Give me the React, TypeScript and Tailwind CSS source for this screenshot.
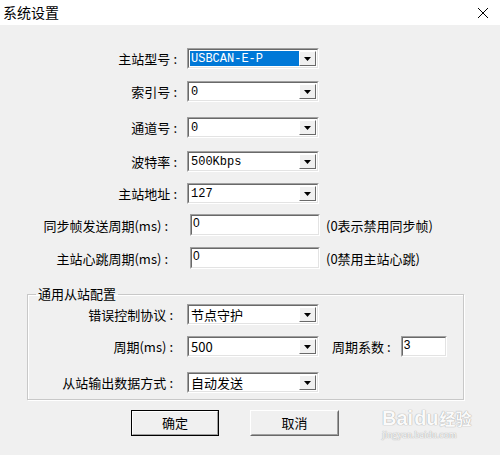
import React from "react";

const cjk = "font-['Microsoft_YaHei','Noto_Sans_CJK_SC',sans-serif]";

const Arrow = () => (
  <svg width="7" height="4" viewBox="0 0 7 4">
    <path d="M0 0h7L3.5 4z" fill="#000" />
  </svg>
);

const Combo = ({ value, selected = false, mono = true }: { value: string; selected?: boolean; mono?: boolean }) => (
  <div className="flex h-[21px] w-[132px] border border-t-[#a0a0a0] border-l-[#a0a0a0] border-b-white border-r-white">
    <div className="flex flex-1 border border-t-[#696969] border-l-[#696969] border-b-[#e3e3e3] border-r-[#e3e3e3] bg-white p-px">
      <div
        className={
          (selected ? "bg-[#0078d7] text-white " : "text-black ") +
          (mono ? "font-['Liberation_Mono',monospace] text-[12px] " : cjk + " text-[13px] ") +
          "flex flex-1 items-center pl-[1px] leading-none"
        }
      >
        {value}
      </div>
      <div className="flex w-[17px] items-center justify-center border border-t-white border-l-white border-b-[#696969] border-r-[#696969] bg-[#f0f0f0]">
        <Arrow />
      </div>
    </div>
  </div>
);

const Edit = ({ value, w = "w-[130px]", h = "h-[22px]" }: { value: string; w?: string; h?: string }) => (
  <div className={`${w} ${h} flex border border-t-[#a0a0a0] border-l-[#a0a0a0] border-b-white border-r-white`}>
    <div className="flex-1 border border-t-[#696969] border-l-[#696969] border-b-[#e3e3e3] border-r-[#e3e3e3] bg-white pl-[1px] font-['Liberation_Sans',sans-serif] text-[12px] leading-[14px] text-black">
      {value}
    </div>
  </div>
);

// label text with the spaced colon the dialog font gives
const Label = ({ text, w }: { text: string; w: string }) => (
  <div className={`${w} ${cjk} shrink-0 text-right text-[13px] leading-none text-black`}>
    {text}
    <span className="ml-[3px]">:</span>
  </div>
);

export default function App() {
  return (
    <div className="relative h-[455px] w-[500px] overflow-hidden bg-[#f0f0f0]">
      <div className="flex h-[25px] items-center justify-between bg-white pl-[3px] pr-[12px]">
        <span className={`${cjk} text-[14px] text-black`}>系统设置</span>
        <svg width="10" height="10" viewBox="0 0 10 10">
          <path d="M0 0L10 10M10 0L0 10" stroke="#000" strokeWidth="1" />
        </svg>
      </div>

      <div className="flex flex-col">
        <div className="mt-[23px] flex h-[21px] items-center">
          <Label text="主站型号" w="w-[177px]" />
          <div className="ml-[10px]"><Combo value="USBCAN-E-P" selected /></div>
        </div>
        <div className="mt-[12px] flex h-[21px] items-center">
          <Label text="索引号" w="w-[177px]" />
          <div className="ml-[10px]"><Combo value="0" /></div>
        </div>
        <div className="mt-[15px] flex h-[21px] items-center">
          <Label text="通道号" w="w-[177px]" />
          <div className="ml-[10px]"><Combo value="0" /></div>
        </div>
        <div className="mt-[13px] flex h-[21px] items-center">
          <Label text="波特率" w="w-[177px]" />
          <div className="ml-[10px]"><Combo value="500Kbps" /></div>
        </div>
        <div className="mt-[11px] flex h-[21px] items-center">
          <Label text="主站地址" w="w-[177px]" />
          <div className="ml-[10px]"><Combo value="127" /></div>
        </div>
        <div className="mt-[10px] flex h-[22px] items-center">
          <Label text="同步帧发送周期(ms)" w="w-[168px]" />
          <div className="ml-[22px]"><Edit value="0" /></div>
          <span className={`${cjk} ml-[6px] text-[13px] leading-none text-black`}>(0表示禁用同步帧)</span>
        </div>
        <div className="mt-[11px] flex h-[22px] items-center">
          <Label text="主站心跳周期(ms)" w="w-[168px]" />
          <div className="ml-[22px]"><Edit value="0" /></div>
          <span className={`${cjk} ml-[6px] text-[13px] leading-none text-black`}>(0禁用主站心跳)</span>
        </div>

        <fieldset className="ml-[27px] mt-[17px] w-[437px] border border-[#c8c8c8] pb-[6px] shadow-[inset_1px_1px_0_#fff,1px_1px_0_#fff]">
          <legend className={`${cjk} ml-[8px] px-[2px] text-[13px] leading-[16px] text-black`}>通用从站配置</legend>
          <div className="mt-[2px] flex h-[21px] items-center">
            <Label text="错误控制协议" w="w-[145px]" />
            <div className="ml-[14px]"><Combo value="节点守护" mono={false} /></div>
          </div>
          <div className="mt-[11px] flex h-[21px] items-center">
            <Label text="周期(ms)" w="w-[145px]" />
            <div className="ml-[14px]"><Combo value="500" mono={false} /></div>
            <span className={`${cjk} ml-[13px] text-[13px] leading-none text-black`}>周期系数<span className="ml-[3px]">:</span></span>
            <div className="ml-[10px]"><Edit value="3" w="w-[46px]" h="h-[21px]" /></div>
          </div>
          <div className="mt-[15px] flex h-[21px] items-center">
            <Label text="从站输出数据方式" w="w-[145px]" />
            <div className="ml-[14px]"><Combo value="自动发送" mono={false} /></div>
          </div>
        </fieldset>

        <div className="mt-[10px] flex">
          <button className="ml-[131px] flex h-[26px] w-[88px] border border-black">
            <span className={`${cjk} flex flex-1 items-center justify-center border border-t-white border-l-white border-b-[#a0a0a0] border-r-[#a0a0a0] bg-[#f0f0f0] text-[13px] text-black`}>确定</span>
          </button>
          <button className="ml-[31px] flex h-[26px] w-[89px] border border-t-white border-l-white border-b-[#696969] border-r-[#696969]">
            <span className={`${cjk} flex flex-1 items-center justify-center border border-t-[#f0f0f0] border-l-[#f0f0f0] border-b-[#a0a0a0] border-r-[#a0a0a0] bg-[#f0f0f0] text-[13px] text-black`}>取消</span>
          </button>
        </div>
      </div>

      <div className="absolute left-[382px] top-[408px] flex flex-col items-start leading-none text-[#fafafa] [text-shadow:0_0_1px_#aaa,0_0_1px_#aaa]">
        <span className="font-['Liberation_Sans',sans-serif] text-[20px] font-bold">Bai<span className="mx-[1px]">du</span><span className={`${cjk} text-[16px]`}>经验</span></span>
        <span className="mt-[2px] font-['Liberation_Serif',serif] text-[10px]">jingyan.baidu.com</span>
      </div>
    </div>
  );
}
